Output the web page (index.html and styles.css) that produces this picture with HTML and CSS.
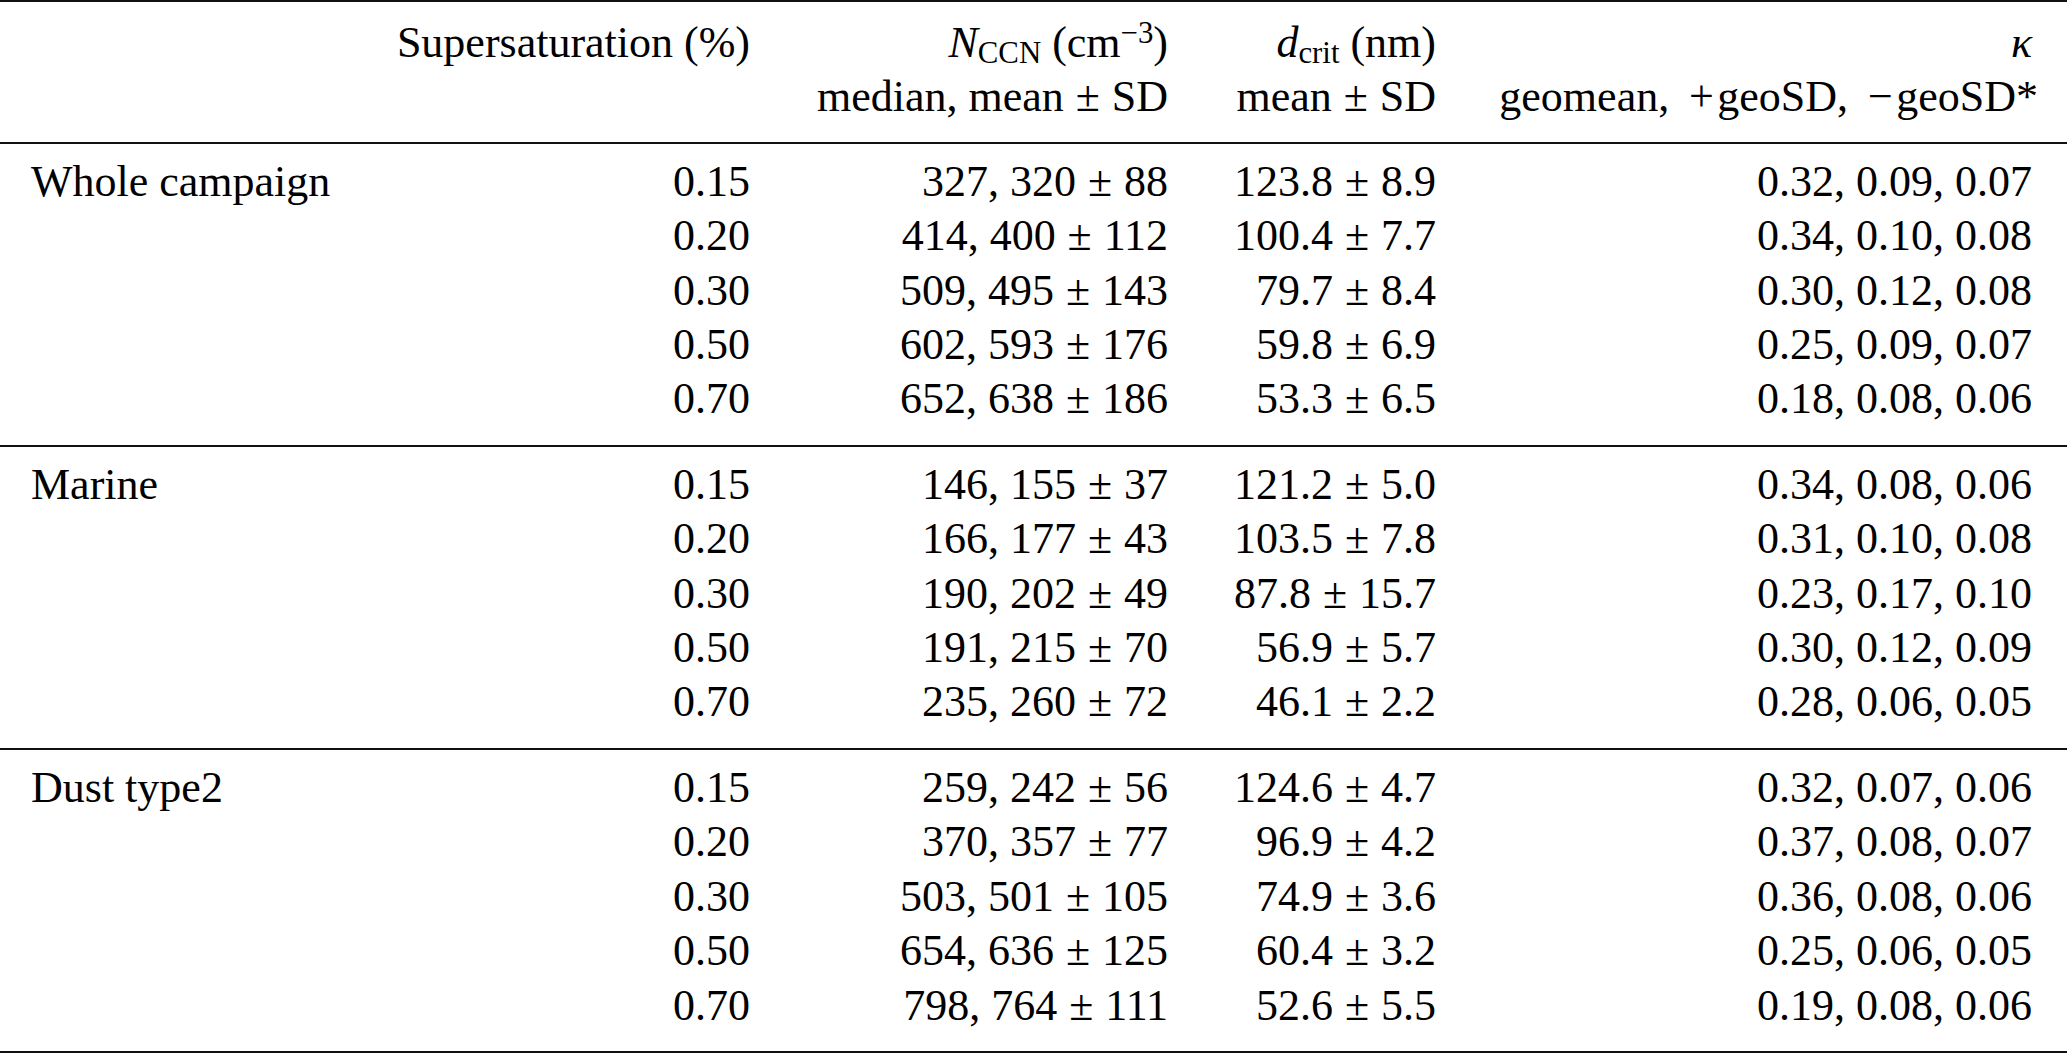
FILE: index.html
```html
<!DOCTYPE html>
<html lang="en">
<head>
<meta charset="utf-8">
<title>CCN table</title>
<link rel="stylesheet" href="styles.css">
</head>
<body>
<div class="table">
  <div class="grid head">
    <div class="cell"></div>
    <div class="cell num">Supersaturation (%)</div>
    <div class="cell num"><i>N</i><sub>CCN</sub> (cm<sup>−3</sup>)</div>
    <div class="cell num"><i>d</i><sub>crit</sub> (nm)</div>
    <div class="cell num"><i class="kappa">κ</i></div>
    <div class="cell"></div>
    <div class="cell"></div>
    <div class="cell num">median, mean<span class="pm">±</span>SD</div>
    <div class="cell num">mean<span class="pm">±</span>SD</div>
    <div class="cell num">geomean, <span class="op">+</span>geoSD, <span class="op">−</span>geoSD<span class="ast">*</span></div>
  </div>

  <div class="grid group">
    <div class="cell label">Whole campaign</div><div class="cell num">0.15</div><div class="cell num">327, 320<span class="pm">±</span>88</div><div class="cell num">123.8<span class="pm">±</span>8.9</div><div class="cell num">0.32, 0.09, 0.07</div>
    <div class="cell"></div><div class="cell num">0.20</div><div class="cell num">414, 400<span class="pm">±</span>112</div><div class="cell num">100.4<span class="pm">±</span>7.7</div><div class="cell num">0.34, 0.10, 0.08</div>
    <div class="cell"></div><div class="cell num">0.30</div><div class="cell num">509, 495<span class="pm">±</span>143</div><div class="cell num">79.7<span class="pm">±</span>8.4</div><div class="cell num">0.30, 0.12, 0.08</div>
    <div class="cell"></div><div class="cell num">0.50</div><div class="cell num">602, 593<span class="pm">±</span>176</div><div class="cell num">59.8<span class="pm">±</span>6.9</div><div class="cell num">0.25, 0.09, 0.07</div>
    <div class="cell"></div><div class="cell num">0.70</div><div class="cell num">652, 638<span class="pm">±</span>186</div><div class="cell num">53.3<span class="pm">±</span>6.5</div><div class="cell num">0.18, 0.08, 0.06</div>
  </div>

  <div class="grid group">
    <div class="cell label">Marine</div><div class="cell num">0.15</div><div class="cell num">146, 155<span class="pm">±</span>37</div><div class="cell num">121.2<span class="pm">±</span>5.0</div><div class="cell num">0.34, 0.08, 0.06</div>
    <div class="cell"></div><div class="cell num">0.20</div><div class="cell num">166, 177<span class="pm">±</span>43</div><div class="cell num">103.5<span class="pm">±</span>7.8</div><div class="cell num">0.31, 0.10, 0.08</div>
    <div class="cell"></div><div class="cell num">0.30</div><div class="cell num">190, 202<span class="pm">±</span>49</div><div class="cell num">87.8<span class="pm">±</span>15.7</div><div class="cell num">0.23, 0.17, 0.10</div>
    <div class="cell"></div><div class="cell num">0.50</div><div class="cell num">191, 215<span class="pm">±</span>70</div><div class="cell num">56.9<span class="pm">±</span>5.7</div><div class="cell num">0.30, 0.12, 0.09</div>
    <div class="cell"></div><div class="cell num">0.70</div><div class="cell num">235, 260<span class="pm">±</span>72</div><div class="cell num">46.1<span class="pm">±</span>2.2</div><div class="cell num">0.28, 0.06, 0.05</div>
  </div>

  <div class="grid group">
    <div class="cell label">Dust type2</div><div class="cell num">0.15</div><div class="cell num">259, 242<span class="pm">±</span>56</div><div class="cell num">124.6<span class="pm">±</span>4.7</div><div class="cell num">0.32, 0.07, 0.06</div>
    <div class="cell"></div><div class="cell num">0.20</div><div class="cell num">370, 357<span class="pm">±</span>77</div><div class="cell num">96.9<span class="pm">±</span>4.2</div><div class="cell num">0.37, 0.08, 0.07</div>
    <div class="cell"></div><div class="cell num">0.30</div><div class="cell num">503, 501<span class="pm">±</span>105</div><div class="cell num">74.9<span class="pm">±</span>3.6</div><div class="cell num">0.36, 0.08, 0.06</div>
    <div class="cell"></div><div class="cell num">0.50</div><div class="cell num">654, 636<span class="pm">±</span>125</div><div class="cell num">60.4<span class="pm">±</span>3.2</div><div class="cell num">0.25, 0.06, 0.05</div>
    <div class="cell"></div><div class="cell num">0.70</div><div class="cell num">798, 764<span class="pm">±</span>111</div><div class="cell num">52.6<span class="pm">±</span>5.5</div><div class="cell num">0.19, 0.08, 0.06</div>
  </div>
</div>
</body>
</html>
```

FILE: styles.css
```css
html, body {
  margin: 0;
  padding: 0;
  background: #ffffff;
}

body {
  font-family: "Liberation Serif", "Times New Roman", serif;
  font-size: 44px;
  color: #000000;
}

.table {
  width: 2067px;
  border-top: 2px solid #111111;
  border-bottom: 2px solid #111111;
}

.grid {
  display: grid;
  grid-template-columns: 300px 450px 418px 268px 596px;
  padding-right: 35px;
  line-height: 54.4px;
}

.head {
  padding-top: 13.5px;
  padding-bottom: 18px;
}

.group {
  border-top: 2px solid #111111;
  padding-top: 10.5px;
  padding-bottom: 18.5px;
}

.cell {
  white-space: nowrap;
}

.label {
  padding-left: 31px;
  text-align: left;
}

.num {
  text-align: right;
}

.pm {
  margin: 0 0.27em;
}

.op {
  margin-left: 0.2em;
  margin-right: 0.08em;
}

.ast {
  margin-right: -6px;
}

sub, sup {
  font-size: 0.7em;
  line-height: 0;
  position: relative;
  vertical-align: baseline;
}

sub {
  top: 6px;
}

sup {
  top: -14px;
}

.kappa {
  font-style: italic;
}
```
